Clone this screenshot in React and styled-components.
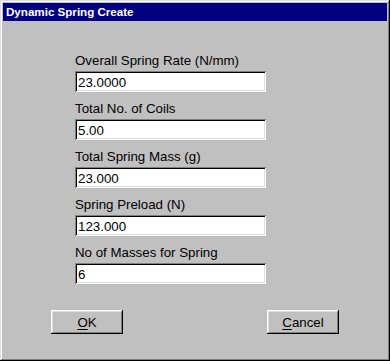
import React from 'react';
import styled, { createGlobalStyle } from 'styled-components';

const GlobalStyle = createGlobalStyle`
  html, body {
    margin: 0;
    padding: 0;
    background: #c0c0c0;
  }
  body {
    font-family: "Liberation Sans", Arial, sans-serif;
  }
`;

const Window = styled.div`
  box-sizing: border-box;
  width: 390px;
  height: 361px;
  padding: 3px;
  background: #c0c0c0;
  box-shadow: inset -1px -1px #000, inset 1px 1px #dfdfdf, inset -2px -2px #808080, inset 2px 2px #fff;
  display: flex;
  flex-direction: column;
`;

const TitleBar = styled.div`
  height: 18px;
  background: #000080;
  color: #fff;
  font-weight: bold;
  font-size: 11.6px;
  line-height: 18px;
  padding-left: 3px;
  white-space: nowrap;
`;

const Form = styled.div`
  padding: 32px 0 0 72px;
  display: flex;
  flex-direction: column;
`;

const Field = styled.div`
  display: flex;
  flex-direction: column;
  width: 191px;
  margin-bottom: 9px;
`;

const Label = styled.label`
  font-size: 13.3px;
  line-height: 16px;
  height: 16px;
  margin-bottom: 2px;
  color: #000;
  white-space: nowrap;
`;

const TextBox = styled.input`
  box-sizing: border-box;
  width: 191px;
  height: 21px;
  margin: 0;
  border: none;
  outline: none;
  padding: 2px 0 0 3px;
  background: #fff;
  color: #000;
  font-family: "Liberation Sans", Arial, sans-serif;
  font-size: 13.3px;
  box-shadow: inset 1px 1px #808080, inset -1px -1px #fff, inset 2px 2px #000, inset -2px -2px #dfdfdf;
`;

const ButtonRow = styled.div`
  display: flex;
  gap: 144px;
  padding: 17px 0 0 48px;
`;

const Button = styled.button`
  box-sizing: border-box;
  width: 72px;
  height: 24px;
  padding: 0;
  border: none;
  background: #c0c0c0;
  color: #000;
  font-family: "Liberation Sans", Arial, sans-serif;
  font-size: 13.3px;
  box-shadow: inset -1px -1px #000, inset 1px 1px #fff, inset -2px -2px #808080, inset 2px 2px #dfdfdf;

  u {
    text-decoration: underline;
    text-underline-offset: 2px;
  }
`;

const fields = [
  { label: 'Overall Spring Rate (N/mm)', value: '23.0000' },
  { label: 'Total No. of Coils', value: '5.00' },
  { label: 'Total Spring Mass (g)', value: '23.000' },
  { label: 'Spring Preload (N)', value: '123.000' },
  { label: 'No of Masses for Spring', value: '6' },
];

export default function App() {
  return (
    <>
      <GlobalStyle />
      <Window>
        <TitleBar>Dynamic Spring Create</TitleBar>
        <Form>
          {fields.map((f) => (
            <Field key={f.label}>
              <Label>{f.label}</Label>
              <TextBox defaultValue={f.value} />
            </Field>
          ))}
        </Form>
        <ButtonRow>
          <Button><u>O</u>K</Button>
          <Button><u>C</u>ancel</Button>
        </ButtonRow>
      </Window>
    </>
  );
}
